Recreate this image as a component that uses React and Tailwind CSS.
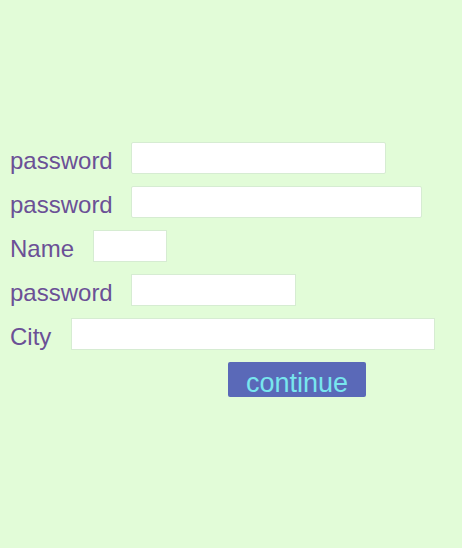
const rows = [
  { label: "password", width: "w-[255px]", rounded: "rounded-[2px]", gap: "mr-[18px]" },
  { label: "password", width: "w-[291px]", rounded: "rounded-[2px]", gap: "mr-[18px]" },
  { label: "Name", width: "w-[74px]", rounded: "", gap: "mr-[19px]" },
  { label: "password", width: "w-[165px]", rounded: "", gap: "mr-[18px]" },
  { label: "City", width: "w-[364px]", rounded: "", gap: "mr-[20px]" },
];

export default function App() {
  return (
    <div
      className="w-[462px] h-[548px] bg-[#e2fcd8] pt-[142px] pl-[9px]"
      style={{ fontFamily: '"Liberation Sans", Arial, sans-serif' }}
    >
      <form className="flex flex-col gap-[12px]">
        {rows.map((row, i) => (
          <div key={i} className="flex items-start h-[32px]">
            <label className={`text-[24px] leading-none text-[#6b5096] pt-[7px] pl-[1px] ${row.gap}`}>
              {row.label}
            </label>
            <input
              type="text"
              className={`h-[32px] bg-white border border-[#d6ecd2] outline-none ${row.width} ${row.rounded}`}
            />
          </div>
        ))}
        <div className="pl-[219px]">
          <button
            type="button"
            className="flex items-start justify-center w-[138px] h-[35px] bg-[#5a69b8] text-[#78e6ee] text-[27px] leading-none rounded-[2px] pt-[8px]"
          >
            continue
          </button>
        </div>
      </form>
    </div>
  );
}
